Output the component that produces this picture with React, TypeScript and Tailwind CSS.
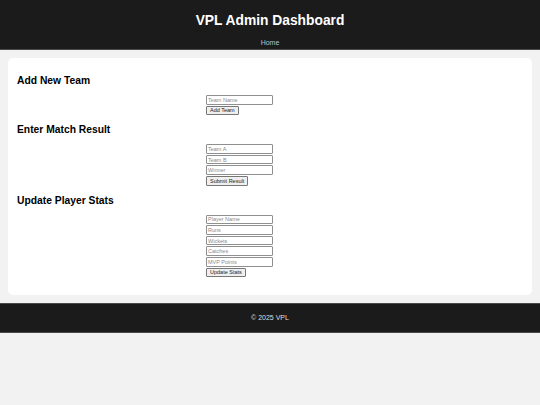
const sections = [
  { title: "Add New Team", fields: ["Team Name"], button: "Add Team" },
  { title: "Enter Match Result", fields: ["Team A", "Team B", "Winner"], button: "Submit Result" },
  {
    title: "Update Player Stats",
    fields: ["Player Name", "Runs", "Wickets", "Catches", "MVP Points"],
    button: "Update Stats",
  },
];

export default function App() {
  return (
    <div className="min-h-[405px] bg-[#f2f2f2] font-['Liberation_Sans',Arial,sans-serif]">
      <header className="h-[50px] bg-[#1b1b1b] border-b border-[#4a4a4a] text-center">
        <h1 className="pt-[12px] text-[13.8px] leading-[18px] font-bold text-white">VPL Admin Dashboard</h1>
        <nav className="mt-[9px] text-[7px] leading-[8px] text-[#a9c3d3]">
          <a href="#">Home</a>
        </nav>
      </header>

      <main className="mx-[8px] mt-[8px] rounded-[5px] bg-white px-[9px] pt-[16px] pb-[18px]">
        {sections.map((s, i) => (
          <section key={s.title} className={i > 0 ? "mt-[8px]" : ""}>
            <h2 className="text-[10.3px] leading-[14px] font-bold text-black">{s.title}</h2>
            <form className="mx-auto mt-[7px] flex w-[128px] flex-col items-start gap-[1px]">
              {s.fields.map((f) => (
                <input
                  key={f}
                  placeholder={f}
                  className="h-[9.6px] w-[67px] rounded-[1px] border border-[#8f8f8f] bg-white px-[1px] text-[5.5px] leading-[6px] placeholder:text-[#8a8a8a] outline-none"
                />
              ))}
              <button
                type="button"
                className="h-[9.6px] rounded-[1px] border border-[#777] bg-[#efefef] px-[3px] text-[5.5px] leading-[6px] text-[#222]"
              >
                {s.button}
              </button>
            </form>
          </section>
        ))}
      </main>

      <footer className="mt-[8px] h-[30px] border-y border-[#4a4a4a] bg-[#1b1b1b] flex items-center justify-center text-[7px] text-[#dddddd]">
        © 2025 VPL
      </footer>
    </div>
  );
}
